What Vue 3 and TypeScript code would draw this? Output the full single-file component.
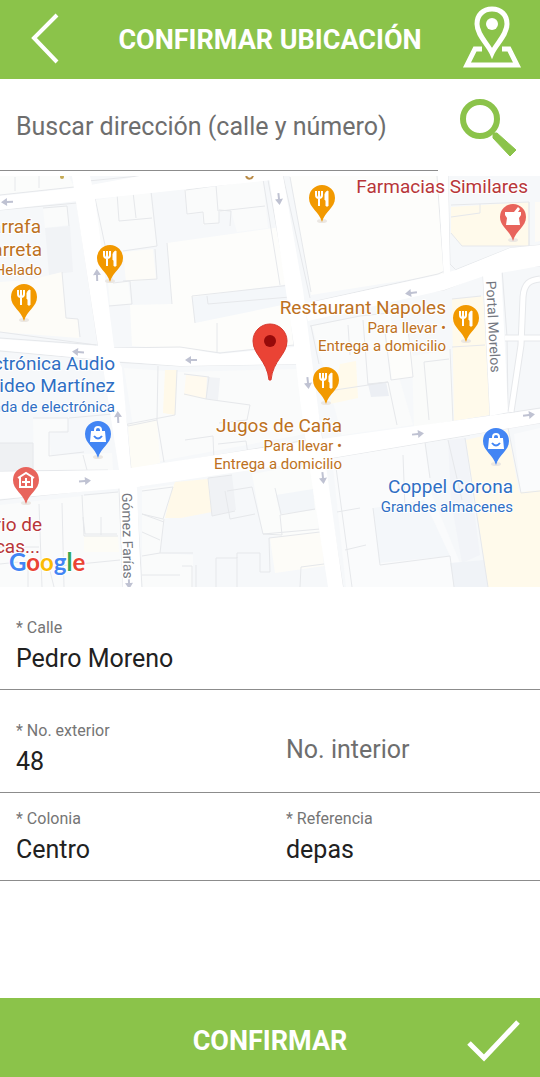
<script setup lang="ts">
import { ref } from 'vue'

type Tone = 'food' | 'shop' | 'health'
type Glyph = 'fork' | 'bag' | 'mortar' | 'clinic'

interface Place { x: number; y: number; tone: Tone; glyph: Glyph }
interface MapLabel { x: number; y: number; text: string; tone: Tone; anchor: 'start' | 'end'; small?: boolean }
interface Shape { points: string; fill: string }
interface Arrow { x: number; y: number; angle: number }

const query = ref('')
const street = ref('Pedro Moreno')
const outerNumber = ref('48')
const innerNumber = ref('')
const district = ref('Centro')
const reference = ref('depas')

const places: Place[] = [
  { x: 322, y: 199, tone: 'food', glyph: 'fork' },
  { x: 110, y: 259, tone: 'food', glyph: 'fork' },
  { x: 24, y: 298, tone: 'food', glyph: 'fork' },
  { x: 466, y: 319, tone: 'food', glyph: 'fork' },
  { x: 326, y: 381, tone: 'food', glyph: 'fork' },
  { x: 98, y: 435, tone: 'shop', glyph: 'bag' },
  { x: 496, y: 442, tone: 'shop', glyph: 'bag' },
  { x: 513, y: 218, tone: 'health', glyph: 'mortar' },
  { x: 26, y: 481, tone: 'health', glyph: 'clinic' },
]

const labels: MapLabel[] = [
  { x: 528, y: 193, text: 'Farmacias Similares', tone: 'health', anchor: 'end' },
  { x: 41, y: 233, text: 'Garrafa', tone: 'food', anchor: 'end' },
  { x: 42, y: 256, text: 'Carreta', tone: 'food', anchor: 'end' },
  { x: 42, y: 275, text: 'Helado', tone: 'food', anchor: 'end', small: true },
  { x: 446, y: 314, text: 'Restaurant Napoles', tone: 'food', anchor: 'end' },
  { x: 446, y: 333, text: 'Para llevar •', tone: 'food', anchor: 'end', small: true },
  { x: 446, y: 351, text: 'Entrega a domicilio', tone: 'food', anchor: 'end', small: true },
  { x: 115, y: 370, text: 'Electrónica Audio', tone: 'shop', anchor: 'end' },
  { x: 115, y: 392, text: 'Video Martínez', tone: 'shop', anchor: 'end' },
  { x: 115, y: 412, text: 'Tienda de electrónica', tone: 'shop', anchor: 'end', small: true },
  { x: 342, y: 432, text: 'Jugos de Caña', tone: 'food', anchor: 'end' },
  { x: 342, y: 451, text: 'Para llevar •', tone: 'food', anchor: 'end', small: true },
  { x: 342, y: 469, text: 'Entrega a domicilio', tone: 'food', anchor: 'end', small: true },
  { x: 513, y: 493, text: 'Coppel Corona', tone: 'shop', anchor: 'end' },
  { x: 513, y: 512, text: 'Grandes almacenes', tone: 'shop', anchor: 'end', small: true },
  { x: 42, y: 531, text: 'Laboratorio de', tone: 'health', anchor: 'end' },
  { x: 40, y: 553, text: 'Clínicas...', tone: 'health', anchor: 'end' },
]

const buildings: Shape[] = [
  { points: '0,176 69,176 74,187 0,195', fill: '#fbfcfb' },
  { points: '96,200 150,192 157,246 101,253', fill: '#fafbfb' },
  { points: '43,208 67,206 69,225 45,228', fill: '#fafbfb' },
  { points: '45,228 70,226 73,272 49,275', fill: '#f1f3f6' },
  { points: '0,282 30,280 62,272 66,318 78,319 79,338 0,332', fill: '#fdfcf8' },
  { points: '123,252 153,249 156,279 126,282', fill: '#fdfcf8' },
  { points: '108,283 128,281 131,304 110,305', fill: '#fbfcfb' },
  { points: '167,243 281,227 288,286 294,345 220,352 132,346 130,305 172,304', fill: '#fdfdfb' },
  { points: '184,190 263,179 268,228 237,232 231,211 219,212 219,224 203,225 202,213 187,215', fill: '#fafbfb' },
  { points: '192,297 290,284 292,303 195,323', fill: '#f4f7fa' },
  { points: '290,176 439,176 444,274 311,295', fill: '#fdfdfb' },
  { points: '451,207 529,202 529,246 510,246 462,246 451,233', fill: '#fffaeb' },
  { points: '535,202 540,202 540,241 535,242', fill: '#fdfbf6' },
  { points: '452,299 483,296 490,415 454,421', fill: '#fffaeb' },
  { points: '312,326 360,316 390,312 399,377 413,425 342,435', fill: '#fafbfb' },
  { points: '386,331 408,328 416,377 392,380', fill: '#fdfdfb' },
  { points: '412,356 450,350 453,422 414,428', fill: '#fafbfa' },
  { points: '368,384 386,382 389,396 371,397', fill: '#eceff4' },
  { points: '340,364 356,361 358,398 330,404', fill: '#fffaeb' },
  { points: '124,368 180,372 298,369 300,400 305,434 139,465', fill: '#fafbfb' },
  { points: '165,370 177,370 175,415 163,413', fill: '#fff9e9' },
  { points: '186,375 209,377 206,399 184,395', fill: '#fffaef' },
  { points: '207,377 220,378 218,400 206,399', fill: '#f1f3f6' },
  { points: '0,443 33,443 33,470 0,470', fill: '#eff1f3' },
  { points: '33,418 68,418 68,430 49,433 51,455 112,453 113,470 34,470', fill: '#fafbfb' },
  { points: '128,425 157,420 160,463 131,470', fill: '#fdfcf6' },
  { points: '0,505 119,492 122,587 0,587', fill: '#fafbfb' },
  { points: '84,536 118,536 119,552 84,552', fill: '#fdfcf6' },
  { points: '142,489 205,480 206,511 165,519 160,553 193,555 193,587 142,587', fill: '#fafbfb' },
  { points: '175,482 208,479 212,512 181,518 165,518 171,493', fill: '#fff9e9' },
  { points: '209,478 232,475 236,510 212,516', fill: '#f0f2f5' },
  { points: '252,474 312,463 316,506 320,539 282,537 263,534', fill: '#fbfcfb' },
  { points: '276,495 313,489 315,510 280,514', fill: '#f3f6f9' },
  { points: '270,538 321,532 324,566 275,573', fill: '#fdfcf8' },
  { points: '332,458 424,440 432,495 470,587 346,587', fill: '#fafbfc' },
  { points: '448,440 465,438 480,555 462,563 451,501', fill: '#f2f4f8' },
  { points: '466,440 508,430 519,492 540,490 540,587 488,587', fill: '#fffaeb' },
  { points: '514,434 540,428 540,490 521,492', fill: '#fafbfc' },
  { points: '373,508 424,500 450,556 379,563', fill: '#f4f7fa' },
  { points: '450,563 484,560 488,587 454,587', fill: '#f0f3f7' },
]

const outlines: string[] = [
  'M0 195L74 187M15 177V191M39 176V188M88 181L139 176',
  'M0 210L77 203L98 345L0 338',
  'M95 198L151 191L157 246L123 251M117 193L119 221L152 218M133 192L136 218M95 198L113 283L130 281L132 304L109 306',
  'M155 249L157 279L123 281M167 243L172 304M43 208L67 206L69 226M62 272L66 318L78 319L80 337M0 332L96 345',
  'M185 190L187 214L203 212L204 224L219 223V210L231 211L230 226M216 185L218 211M186 190L263 179L280 285M220 211L265 206',
  'M114 348L180 347L220 353L294 345M192 296L291 285M207 296L208 304L290 297M192 296L195 323M217 323V352',
  'M268 180L288 290L294 346M283 176L310 298M290 177L311 292M312 302L438 274L447 270',
  'M437 176L444 274M448 176L450 264L455 269M451 205L529 202V246H462L451 233M480 204V213L451 217M529 202V246',
  'M360 300L444 290L482 275M455 270L510 248L540 245M500 269L540 266M483 276L490 415M502 269L507 337L508 410',
  'M310 326L360 316L398 312M311 326L319 364M348 325L350 355M363 320L368 385M385 332L391 380L413 377L408 328M368 384L388 382L397 425',
  'M424 362L449 359M424 362L429 420M450 349L453 422M452 299L481 296M452 347L485 345',
  'M0 351L102 360M114 362L180 366L298 364M120 364L131 469M158 366L157 420L128 426L121 411M177 370L175 415L128 424M157 420L164 462',
  'M184 374L209 377L206 399L184 394M206 399L250 405L247 420L219 423M300 365L310 440M310 365L322 438M322 392L388 382',
  'M0 471L108 470M130 470L307 440M140 486L307 456M0 500L119 487M136 490L142 587M119 488L123 587',
  'M33 470V443H0M33 418H68V432H49V456L84 452M83 455L87 470M69 418L113 414M185 440L213 436L214 461M218 444L246 441L248 454',
  'M82 495L84 536H118M83 517L85 534H117M101 517V535M118 492L84 495M62 503L64 587M39 504L42 587M0 547H39',
  'M142 491L173 487L163 519L142 514M164 519L160 553H193M142 532L160 540M142 514L164 522M142 556L160 553',
  'M208 478L212 516L235 511M208 478L232 475M227 491L252 487L263 534L320 529M225 491L230 519L255 514M263 534L282 535L280 515L315 509M275 488L281 514',
  'M216 587V558H237V553H260V572H270L269 538L320 532M192 587V566H182M196 565V587M237 557V587M300 587L301 567L324 564',
  'M332 458L470 435M335 460L352 587M324 465L343 587M337 512L360 508M345 550L366 545',
  'M425 442L430 478M448 440L462 500M465 438L488 587M380 565L450 556L454 587M373 508L380 565M403 455L405 509',
  'M0 564L28 561V587M54 587L49 567L120 560M142 575H180M508 428L521 493L540 491M360 436L540 408M360 453L540 423',
]

const roads: string[] = [
  '0,196 74,188 140,176 275,176 272,180 95,199 0,210',
  '72,176 90,176 95,198 114,347 122,368 131,470 137,488 141,587 123,587 119,470 102,360 98,346',
  '0,339 98,346 114,348 180,348 220,354 294,347 300,347 300,364 180,366 102,360 0,350',
  '269,176 283,176 303,290 310,346 322,438 343,587 328,587 308,457 300,400 294,346',
  '303,304 438,275 456,270 510,248 540,245 540,266 484,276 444,290 308,321',
  '438,176 448,176 450,275 444,280',
  '483,274 501,267 508,412 490,416',
  '0,472 118,470 307,441 540,409 540,423 332,458 137,487 0,499',
]

const arrows: Arrow[] = [
  { x: 7, y: 202, angle: 178 },
  { x: 97, y: 275, angle: -92 },
  { x: 78, y: 352, angle: 184 },
  { x: 279, y: 199, angle: 84 },
  { x: 191, y: 360, angle: 180 },
  { x: 411, y: 293, angle: 172 },
  { x: 118, y: 417, angle: -93 },
  { x: 85, y: 481, angle: -5 },
  { x: 308, y: 383, angle: 84 },
  { x: 323, y: 478, angle: 84 },
  { x: 418, y: 434, angle: -6 },
  { x: 529, y: 415, angle: -7 },
  { x: 129, y: 583, angle: 88 },
]
</script>

<template>
  <div class="screen">
    <header class="bar">
      <button class="icon-button" type="button" aria-label="Volver">
        <svg width="54" height="60" viewBox="0 0 54 60" fill="none">
          <path d="M36 5L13 28L36 52" stroke="#fff" stroke-width="4" />
        </svg>
      </button>
      <h1 class="title">CONFIRMAR UBICACIÓN</h1>
      <button class="icon-button" type="button" aria-label="Mi ubicación">
        <svg width="60" height="64" viewBox="0 0 60 64" fill="none" stroke="#fff">
          <path d="M30 45C26 36 15 27 15 16C15 7 21 1 30 1S45 7 45 16C45 27 34 36 30 45Z" stroke-width="5" />
          <circle cx="30" cy="16" r="6" fill="#fff" stroke="none" />
          <path d="M20 41H13L5 57H55L47 41H40" stroke-width="5" />
        </svg>
      </button>
    </header>

    <main class="content">
      <form class="search" role="search" @submit.prevent>
        <input v-model="query" class="search-input" type="text" placeholder="Buscar dirección (calle y número)" aria-label="Buscar dirección (calle y número)" />
        <button class="icon-button" type="submit" aria-label="Buscar">
          <svg width="60" height="60" viewBox="0 0 60 60" fill="none" stroke="#8bc34a">
            <circle cx="21" cy="21" r="17" stroke-width="6" />
            <path d="M34 35L38 35L57 52L51 58L34 40Z" fill="#8bc34a" stroke-width="1" />
          </svg>
        </button>
      </form>

      <svg class="map" viewBox="0 176 540 411" role="img" aria-label="Mapa">
        <rect y="176" width="540" height="411" fill="#f6f8fa" />
        <polygon v-for="b in buildings" :key="b.points" :points="b.points" :fill="b.fill" />
        <path v-for="o in outlines" :key="o" :d="o" class="outline" />
        <polygon v-for="r in roads" :key="r" :points="r" fill="#fff" />
        <path d="M511 412L521 345L523 297C524 283 530 280 540 279M505 338H540" class="lane-edge" />
        <path d="M511 412L521 345L523 297C524 283 530 280 540 279M505 338H540" class="lane" />
        <g v-for="a in arrows" :key="a.x + '-' + a.y" :transform="`translate(${a.x} ${a.y}) rotate(${a.angle})`">
          <path d="M-6 -1H0V-4L6 0L0 4V1H-6Z" fill="#bfc2d2" />
        </g>

        <text class="road" transform="translate(486 281) rotate(87)">Portal Morelos</text>
        <text class="road" transform="translate(122 493) rotate(89)">Gómez Farías</text>
        <path d="M246 176C248 180 252 179 253 176" fill="none" stroke="#b98a45" stroke-width="2" />
        <circle cx="62" cy="177" r="2" fill="#c5aa55" />

        <g v-for="p in places" :key="p.x + '-' + p.y" :transform="`translate(${p.x} ${p.y})`">
          <ellipse cx="0" cy="22" rx="5" ry="2" fill="#ebe7e2" />
          <path :class="['pin', p.tone]" d="M0 -14A13 13 0 0 0 -13 -1C-13 9 -3 12 0 23C3 12 13 9 13 -1A13 13 0 0 0 0 -14Z" />
          <g v-if="p.glyph === 'fork'" fill="none" stroke="#fff">
            <path d="M-6 -8V-4Q-6 -1 -3 -1Q0 -1 0 -4V-8M-3 -8V7" stroke-width="2" />
            <path d="M3 -5Q4 -8 6 -8V7H4V1H3Z" fill="#fff" stroke-width="1" />
          </g>
          <g v-else-if="p.glyph === 'bag'">
            <path d="M-7 -4H7L8 7H-8Z" fill="#fff" />
            <path d="M-3 -3V-5Q-3 -8 0 -8T3 -5V-3" fill="none" stroke="#fff" stroke-width="2" />
            <path d="M-4 1Q0 6 4 1" fill="none" stroke="#4285f4" stroke-width="2" />
          </g>
          <g v-else-if="p.glyph === 'mortar'" fill="#fff">
            <path d="M-8 -6H1L5 -11L7 -9L5 -6H8V-3L6 0L7 7H-7L-6 0L-8 -3Z" />
          </g>
          <g v-else fill="none" stroke="#fff" stroke-width="2">
            <path d="M-8 -3L0 -8L8 -3M-6 -4V6H6V-4M-4 1H4M0 -3V5" />
          </g>
        </g>

        <text v-for="l in labels" :key="l.text + l.y" :x="l.x" :y="l.y" :text-anchor="l.anchor" :class="['label', l.tone, { small: l.small }]">{{ l.text }}</text>

        <g>
          <path d="M270 324A17 17 0 0 0 253 341C253 355 267 360 269 380H271C273 360 287 355 287 341A17 17 0 0 0 270 324Z" fill="#ea4335" stroke="#d73b30" stroke-width="1" />
          <circle cx="270" cy="341" r="6" fill="#960a0a" />
        </g>

        <text x="9" y="571" class="logo"><tspan fill="#4285f4">G</tspan><tspan fill="#ea4335">o</tspan><tspan fill="#fbbc05">o</tspan><tspan fill="#4285f4">g</tspan><tspan fill="#34a853">l</tspan><tspan fill="#ea4335">e</tspan></text>
      </svg>

      <form id="address" class="address" @submit.prevent>
        <div class="row row-spaced">
          <div class="field">
            <label for="street">* Calle</label>
            <input id="street" v-model="street" type="text" />
          </div>
        </div>
        <div class="row row-spaced">
          <div class="field">
            <label for="outer">* No. exterior</label>
            <input id="outer" v-model="outerNumber" type="text" />
          </div>
          <div class="field">
            <input v-model="innerNumber" type="text" placeholder="No. interior" aria-label="No. interior" />
          </div>
        </div>
        <div class="row">
          <div class="field">
            <label for="district">* Colonia</label>
            <input id="district" v-model="district" type="text" />
          </div>
          <div class="field">
            <label for="reference">* Referencia</label>
            <input id="reference" v-model="reference" type="text" />
          </div>
        </div>
      </form>
    </main>

    <button class="bar confirm" type="submit" form="address">
      <span class="confirm-text">CONFIRMAR</span>
      <svg width="60" height="60" viewBox="0 0 60 60" fill="none" aria-hidden="true">
        <path d="M7 35L22 50L56 14" stroke="#fff" stroke-width="5" />
      </svg>
    </button>
  </div>
</template>

<style>
body {
  margin: 0;
  background: #fff;
}
</style>

<style scoped>
.screen {
  display: flex;
  flex-direction: column;
  min-height: 100vh;
  font-family: Roboto, "Liberation Sans", sans-serif;
  color: #212121;
}

button,
input {
  box-sizing: border-box;
  margin: 0;
  padding: 0;
  border: 0;
  background: transparent;
  color: inherit;
  font: inherit;
}

svg {
  display: block;
}

.bar {
  display: grid;
  grid-template-columns: 60px 1fr 60px;
  align-items: center;
  box-sizing: border-box;
  width: 100%;
  height: 79px;
  padding: 0 18px;
  background: #8bc34a;
  color: #fff;
}

.icon-button {
  display: flex;
  justify-content: center;
  cursor: pointer;
}

.icon-button svg {
  overflow: visible;
}

.title,
.confirm-text {
  margin: 0;
  font-size: 27px;
  font-weight: 700;
  line-height: 32px;
  text-align: center;
  white-space: nowrap;
}

.confirm {
  cursor: pointer;
}

.confirm-text {
  grid-column: 2;
  padding-top: 6px;
}

.content {
  flex: 1;
}

.search {
  display: grid;
  grid-template-columns: 1fr 102px;
  height: 97px;
}

.search-input {
  height: 92px;
  min-width: 0;
  padding: 4px 0 0 16px;
  border-bottom: 1px solid #8c8c8c;
  font-size: 25px;
}

.search .icon-button {
  align-items: center;
}

input::placeholder {
  color: #6e6e6e;
  opacity: 1;
}

.map {
  width: 100%;
  height: auto;
}

.outline {
  fill: none;
  stroke: #e6e8eb;
  stroke-width: 1;
}

.lane,
.lane-edge {
  fill: none;
  stroke: #fff;
  stroke-width: 5;
}

.lane-edge {
  stroke: #e6e8eb;
  stroke-width: 7;
}

.label {
  font-size: 19px;
  paint-order: stroke;
  stroke: #fff;
  stroke-width: 2;
  stroke-linejoin: round;
}

.label.small {
  font-size: 15px;
}

.label.food { fill: #bd7122; }
.label.shop { fill: #2f6fc4; }
.label.health { fill: #b83639; }

.pin.food { fill: #f29900; }
.pin.shop { fill: #4285f4; }
.pin.health { fill: #e8645c; }

.road {
  font-size: 14px;
  fill: #747780;
  paint-order: stroke;
  stroke: #fff;
  stroke-width: 3;
}

.logo {
  font-family: Lato, Roboto, sans-serif;
  font-size: 24px;
  font-weight: 700;
  paint-order: stroke;
  stroke: #fff;
  stroke-width: 2;
}

.row {
  display: grid;
  grid-auto-columns: 1fr;
  grid-auto-flow: column;
  align-items: center;
  padding: 16px 0 15px;
  border-bottom: 1px solid #8c8c8c;
}

.row-spaced {
  padding-top: 31px;
}

.field {
  display: flex;
  flex-direction: column;
  gap: 4px;
  min-width: 0;
  padding: 0 16px;
}

.field label {
  font-size: 16px;
  line-height: 20px;
  color: #757575;
}

.field input {
  width: 100%;
  height: 32px;
  font-size: 25px;
}
</style>
